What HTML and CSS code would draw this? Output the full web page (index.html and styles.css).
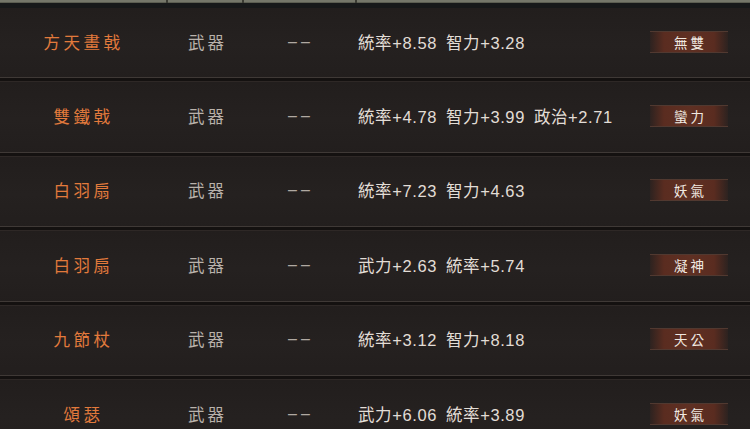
FILE: index.html
```html
<!DOCTYPE html>
<html lang="zh-Hant">
<head>
<meta charset="utf-8">
<title>武器</title>
<link rel="stylesheet" href="styles.css">
</head>
<body>
<div class="table">
  <div class="head">
    <span class="hcell c1"></span><span class="hcell c2"></span><span class="hcell c3"></span><span class="hcell c4"></span>
  </div>
  <div class="row">
    <div class="cells">
      <div class="name">方天畫戟</div><div class="type">武器</div><div class="dash">––</div>
      <div class="stats"><span>統率+8.58</span><span>智力+3.28</span></div>
      <div class="badge-cell"><span class="badge">無雙</span></div>
    </div>
  </div>
  <div class="row">
    <div class="cells">
      <div class="name">雙鐵戟</div><div class="type">武器</div><div class="dash">––</div>
      <div class="stats"><span>統率+4.78</span><span>智力+3.99</span><span>政治+2.71</span></div>
      <div class="badge-cell"><span class="badge">蠻力</span></div>
    </div>
  </div>
  <div class="row">
    <div class="cells">
      <div class="name">白羽扇</div><div class="type">武器</div><div class="dash">––</div>
      <div class="stats"><span>統率+7.23</span><span>智力+4.63</span></div>
      <div class="badge-cell"><span class="badge">妖氣</span></div>
    </div>
  </div>
  <div class="row">
    <div class="cells">
      <div class="name">白羽扇</div><div class="type">武器</div><div class="dash">––</div>
      <div class="stats"><span>武力+2.63</span><span>統率+5.74</span></div>
      <div class="badge-cell"><span class="badge">凝神</span></div>
    </div>
  </div>
  <div class="row">
    <div class="cells">
      <div class="name">九節杖</div><div class="type">武器</div><div class="dash">––</div>
      <div class="stats"><span>統率+3.12</span><span>智力+8.18</span></div>
      <div class="badge-cell"><span class="badge">天公</span></div>
    </div>
  </div>
  <div class="row">
    <div class="cells">
      <div class="name">頌瑟</div><div class="type">武器</div><div class="dash">––</div>
      <div class="stats"><span>武力+6.06</span><span>統率+3.89</span></div>
      <div class="badge-cell"><span class="badge">妖氣</span></div>
    </div>
  </div>
</div>
</body>
</html>
```
FILE: styles.css
```css
html, body {
  margin: 0;
  padding: 0;
  width: 750px;
  height: 429px;
  overflow: hidden;
  background: #221e1d;
  font-family: "Noto Sans CJK TC", "Noto Sans CJK SC", sans-serif;
}

.table {
  display: flex;
  flex-direction: column;
  width: 750px;
}

.head {
  display: flex;
  height: 3px;
  background: #75776a;
  border-bottom: 5px solid #17191a;
  box-shadow: inset 0 -1px 0 #5c5e52;
}

.hcell {
  height: 3px;
  border-right: 2px solid #3a3b33;
}
.c1 { width: 166px; }
.c2 { width: 74px; }
.c3 { width: 111px; }
.c4 { flex: 1; border-right: none; }

.row {
  display: flex;
  flex-direction: column;
  height: 74.4px;
  flex: none;
  background: linear-gradient(to bottom, #221e1d 0%, #252120 50%, #221e1d 100%);
}

.row::after {
  content: "";
  display: block;
  height: 5px;
  flex: none;
  background: linear-gradient(to bottom, #3f3936 0, #3f3936 1px, #141110 1px, #141110 4px, #2e2826 4px);
}

.cells {
  flex: 1;
  display: grid;
  grid-template-columns: 164px 84px 104px 1fr 78px;
  align-items: center;
  padding-right: 22px;
  padding-bottom: 2px;
}

.name {
  text-align: center;
  color: #e27a3c;
  font-size: 16.5px;
  letter-spacing: 3.5px;
  padding-left: 3px;
}

.type {
  text-align: center;
  color: #b9b2ab;
  font-size: 16.5px;
  letter-spacing: 3px;
  padding-left: 3px;
}

.dash {
  text-align: center;
  color: #b0a9a2;
  font-family: "Liberation Sans", sans-serif;
  font-size: 16px;
  letter-spacing: 4px;
  padding-left: 2px;
}

.stats {
  color: #e2ddd6;
  font-family: "Liberation Sans", "Noto Sans CJK TC", sans-serif;
  font-size: 16.5px;
  letter-spacing: 0.6px;
  display: flex;
  gap: 9px;
  padding-left: 6px;
  white-space: nowrap;
}

.badge-cell {
  display: flex;
  justify-content: center;
}

.badge {
  display: block;
  width: 78px;
  height: 20px;
  line-height: 20px;
  text-align: center;
  color: #f0e9e1;
  font-size: 13.5px;
  letter-spacing: 3px;
  text-indent: 3px;
  background: linear-gradient(to right, rgba(90,44,32,0.15) 0%, #5a2c20 18%, #5f3023 50%, #5a2c20 82%, rgba(90,44,32,0.15) 100%);
  box-shadow: 0 -1px 0 rgba(150,95,75,0.4), 0 1px 0 rgba(150,95,75,0.4);
}
```
